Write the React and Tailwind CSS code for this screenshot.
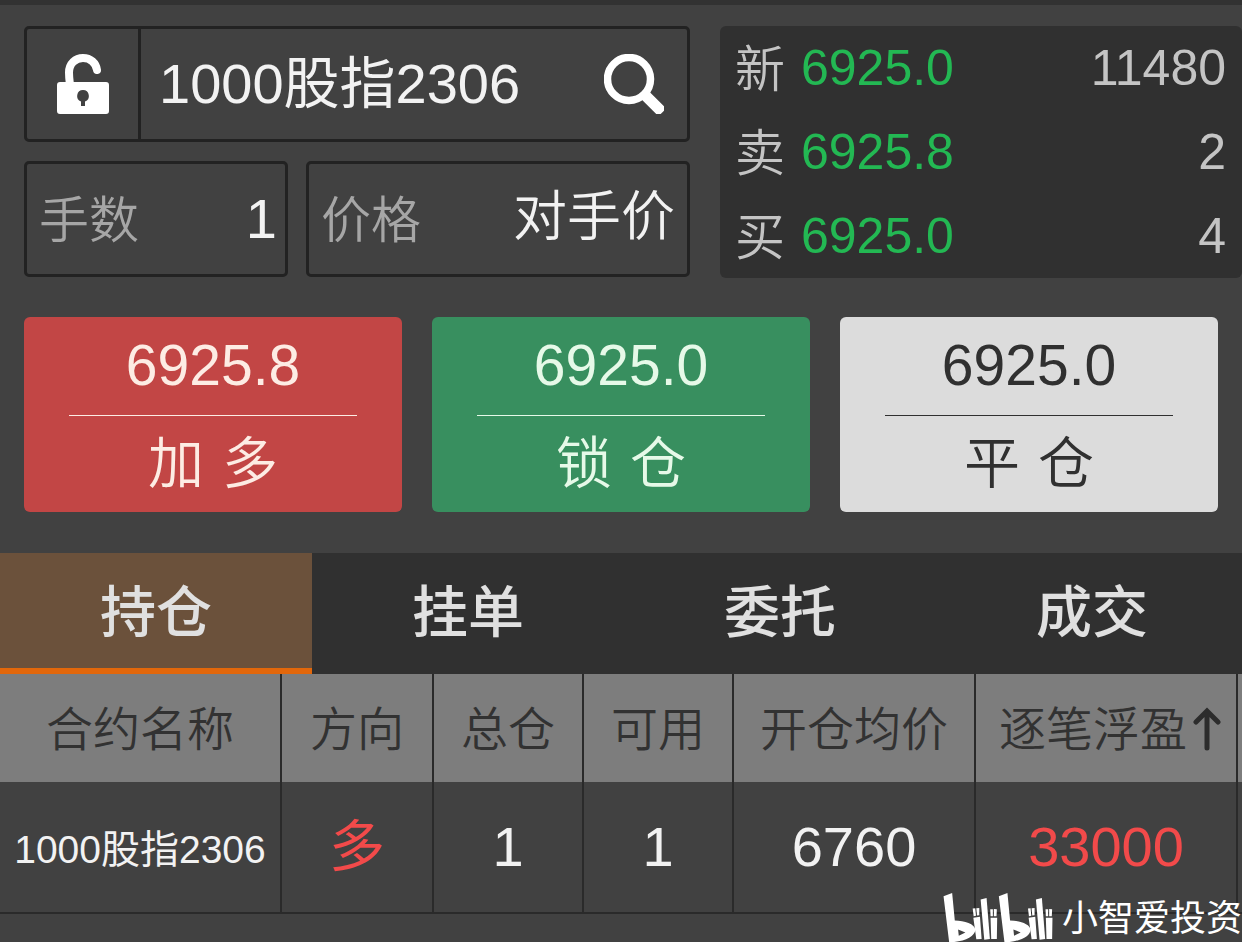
const quotes = [
  { label: "新", price: "6925.0", volume: "11480" },
  { label: "卖", price: "6925.8", volume: "2" },
  { label: "买", price: "6925.0", volume: "4" },
];

const actions = [
  { price: "6925.8", label: "加 多", tone: "bg-[#c24645] text-[#fdece4]", rule: "border-[#fdece4]" },
  { price: "6925.0", label: "锁 仓", tone: "bg-[#388f5f] text-[#e6f9e8]", rule: "border-[#e6f9e8]" },
  { price: "6925.0", label: "平 仓", tone: "bg-[#dcdcdc] text-[#303030]", rule: "border-[#303030]" },
];

const tabs = ["持仓", "挂单", "委托", "成交"];

function UnlockIcon() {
  return (
    <svg viewBox="0 0 52 60" className="h-[60px] w-[52px]" aria-hidden="true">
      <path d="M13 31 C12.4 26 12 23 12 18.5 C12 9.5 18.5 4 26 4 C33.5 4 39 9 40 16" fill="none" stroke="#fff" strokeWidth="8" strokeLinecap="round" />
      <path fillRule="evenodd" fill="#fff" d="M3 28H49Q52 28 52 31V57Q52 60 49 60H3Q0 60 0 57V31Q0 28 3 28ZM26 36A6 6 0 0 0 24 47.6V52H28V47.6A6 6 0 0 0 26 36Z" />
    </svg>
  );
}

function SearchIcon() {
  return (
    <svg viewBox="0 0 60 60" className="size-[60px]" aria-hidden="true">
      <circle cx="25" cy="25" r="21.5" fill="none" stroke="#fff" strokeWidth="7.5" />
      <rect x="37" y="44" width="25" height="11" rx="3" transform="rotate(45 49.5 49.5)" fill="#fff" />
    </svg>
  );
}

function BilibiliLogo() {
  return (
    <svg viewBox="36 38 334 148" className="h-[49px] w-[111px]" fill="#fff" role="img" aria-label="bilibili">
      <g id="half">
        <path fillRule="evenodd" d="M37 48L63 38L71 121C100 121 132 132 133 149C132 170 98 186 54 187ZM81 148L103 157L83 167Z" />
        <path d="M125 85L133 84L135 107L128 108ZM136 84L145 83L145 105L138 106ZM127 113L147 110L152 177L136 178Z" />
        <path d="M149 58L167 53L177 177L160 179Z" />
        <path d="M178 87L186 87L186 108L179 108ZM189 86L198 87L197 108L189 108ZM179 113L199 113L198 177L181 177Z" />
      </g>
      <use href="#half" x="167" />
    </svg>
  );
}

const box = "flex items-center rounded-[5px] border-[3px] border-[#222]";
const cell = "border-r-2 border-[#2a2a2a] text-center font-normal whitespace-nowrap";

export default function App() {
  return (
    <main className="relative min-h-screen overflow-hidden border-t-[5px] border-[#323232] bg-[#414141] font-['Liberation_Sans','Noto_Sans_CJK_SC',sans-serif] text-[#f2f2f2]">
      <section className="grid grid-cols-[666fr_522fr] gap-[30px] pt-[21px] pl-6">
        <div className="flex min-w-0 flex-col gap-[19px]">
          <div className={`${box} h-[116px]`}>
            <button type="button" aria-label="解锁" className="flex h-full w-[114px] shrink-0 items-center justify-center border-r-[3px] border-[#222]">
              <UnlockIcon />
            </button>
            <input aria-label="合约" defaultValue="1000股指2306" className="h-20 min-w-0 flex-1 bg-transparent pl-[18px] text-[56px] outline-none" />
            <button type="button" aria-label="搜索" className="mr-[23px] shrink-0">
              <SearchIcon />
            </button>
          </div>
          <div className="grid grid-cols-[264fr_384fr] gap-[18px]">
            <div className={`${box} h-[116px] min-w-0 pr-2 pl-3`}>
              <label htmlFor="lots" className="shrink-0 pt-1 text-[50px] leading-[72px] font-[350] text-[#a6a6a6]">手数</label>
              <input id="lots" defaultValue="1" className="h-20 min-w-0 flex-1 bg-transparent text-right text-[56px] outline-none" />
            </div>
            <div className={`${box} h-[116px] min-w-0 pr-3 pl-3`}>
              <label htmlFor="price" className="shrink-0 pt-1 text-[50px] leading-[72px] font-[350] text-[#a6a6a6]">价格</label>
              <input id="price" defaultValue="对手价" className="h-20 min-w-0 flex-1 bg-transparent pb-1 text-right text-[54px] font-[350] outline-none" />
            </div>
          </div>
        </div>
        <dl className="flex min-w-0 flex-col rounded-md bg-[#303030] pr-4 pl-[15px] text-[50px] leading-[84px]">
          {quotes.map((q) => (
            <div key={q.label} className="flex text-[#c4c4c4]">
              <dt className="w-[66px] shrink-0 pt-1 leading-[80px] font-[350]">{q.label}</dt>
              <dd className="text-[#23b853]">{q.price}</dd>
              <dd className="ml-auto">{q.volume}</dd>
            </div>
          ))}
        </dl>
      </section>

      <section className="grid grid-cols-3 gap-[30px] px-6 pt-[39px] pb-[41px]">
        {actions.map((a) => (
          <button key={a.label} type="button" className={`flex flex-col rounded-md px-[45px] text-[57px] ${a.tone}`}>
            <span className={`w-full border-b pb-[2px] leading-[96px] ${a.rule}`}>{a.price}</span>
            <span className="w-full font-['DejaVu_Sans','Noto_Sans_CJK_SC',sans-serif] text-[56px] leading-[96px] font-[350]">{a.label}</span>
          </button>
        ))}
      </section>

      <nav role="tablist" className="-mr-1.5 grid grid-cols-4 bg-[#303030]">
        {tabs.map((t, i) => (
          <button
            key={t}
            type="button"
            role="tab"
            aria-selected={i === 0}
            className={`border-b-[6px] pt-1 text-[56px] leading-[111px] font-medium text-[#e0e0e0] ${i === 0 ? "border-[#e2670b] bg-[#6b513b]" : "border-transparent"}`}
          >
            {t}
          </button>
        ))}
      </nav>

      <table className="w-full table-fixed border-separate border-spacing-0">
        <colgroup>
          <col className="w-[282px]" />
          <col className="w-[152px]" />
          <col className="w-[150px]" />
          <col className="w-[150px]" />
          <col className="w-[242px]" />
          <col className="w-[262px]" />
          <col className="w-[4px]" />
        </colgroup>
        <thead>
          <tr className="h-[108px] bg-[#7d7d7d] text-[47px] text-[#323232]">
            {["合约名称", "方向", "总仓", "可用", "开仓均价"].map((h) => (
              <th key={h} scope="col" className={`${cell} px-0 pt-1 pb-0`}><span className="font-[350]">{h}</span></th>
            ))}
            <th scope="col" className={`${cell} px-0 pt-1 pb-0`}>
              <span className="flex items-center justify-center pl-2 font-[350]">
                逐笔浮盈
                <svg viewBox="0 0 30 46" className="ml-1 h-[46px] w-[30px]" fill="none" stroke="#2c2c2c" strokeWidth="5" strokeLinecap="round" aria-hidden="true">
                  <path d="M16 41V4M5 15L16 4L27 15" />
                </svg>
              </span>
            </th>
            <td className="p-0" />
          </tr>
        </thead>
        <tbody>
          <tr className="h-[132px] text-[56px] [&>td]:border-b-2">
            <td className={`${cell} px-0 pt-1.5 pb-0 text-[39px]`}>1000股指2306</td>
            <td className={`${cell} p-0 text-[#f24a4a]`}>多</td>
            <td className={`${cell} p-0`}>1</td>
            <td className={`${cell} p-0`}>1</td>
            <td className={`${cell} p-0`}>6760</td>
            <td className={`${cell} p-0 text-[#f24a4a]`}>33000</td>
            <td className="border-[#2a2a2a] p-0" />
          </tr>
        </tbody>
      </table>

      <footer className="absolute right-0 bottom-0 flex items-end gap-2 overflow-hidden text-white">
        <BilibiliLogo />
        <span className="text-[36px] leading-[46px]">小智爱投资</span>
      </footer>
    </main>
  );
}
